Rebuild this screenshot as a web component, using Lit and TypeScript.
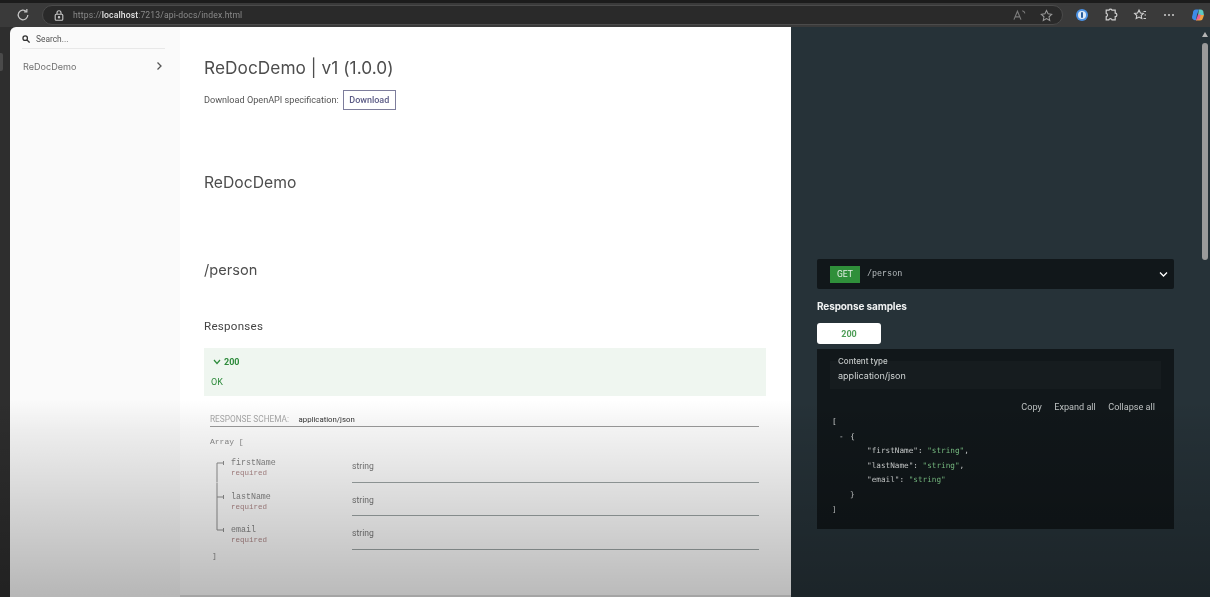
import { LitElement, html, css, svg } from "lit";
import { customElement } from "lit/decorators.js";

const fields = ["firstName", "lastName", "email"];

@customElement("app-root")
export class AppRoot extends LitElement {
  static styles = css`
    :host { display: block; position: relative; width: 1210px; height: 597px; overflow: hidden; background: #2e2e2e; font-family: Roboto, "Liberation Sans", sans-serif; filter: blur(.3px); }
    * { box-sizing: border-box; }
    .toolbar { height: 27px; background: #3a3a3a; border-top: 3px solid #1c1c1c; display: flex; align-items: center; padding: 0 5px 0 16px; }
    .reload { width: 14px; height: 14px; margin-right: 12px; flex: none; }
    .address { flex: none; width: 1021px; height: 20px; border-radius: 10px; background: #2a2a2a; border: 1px solid #4b4b4b; display: flex; align-items: center; padding: 0 9px 0 11px; }
    .lock { width: 10px; height: 11px; margin-right: 9px; flex: none; }
    .url { flex: 1; font-size: 8.6px; color: #8a8a8a; letter-spacing: .12px; }
    .url b { color: #e4e4e4; font-weight: 500; }
    .address svg.a { width: 13px; height: 12px; margin-right: 14px; }
    .address svg.s { width: 13px; height: 13px; }
    .exts { flex: 1; display: flex; align-items: center; justify-content: space-between; padding-left: 12px; }
    .exts svg { width: 14px; height: 14px; flex: none; }
    .page { display: flex; height: 570px; padding-left: 10px; }
    .sidebar { width: 170px; flex: none; background: #fafafa; border-top-left-radius: 6px; padding: 0 15px 0 12px; }
    .search { height: 22px; border-bottom: 1px solid #e8e8e8; display: flex; align-items: center; gap: 6px; font-size: 8.4px; color: #555; padding-top: 3px; }
    .search svg { width: 8px; height: 8px; }
    .nav { display: flex; align-items: center; justify-content: space-between; margin-top: 10px; height: 14px; font-family: Inter, sans-serif; font-size: 9.1px; color: #6f6f6f; padding-left: 1px; }
    .nav svg { width: 8px; height: 10px; margin-right: 2px; }
    .main { width: 611px; flex: none; background: #fff; padding: 0 25px 0 24px; color: #333; }
    h1, h2 { font-family: Inter, sans-serif; font-weight: 400; margin: 0; color: #4d4d4d; }
    h1 { font-size: 17.25px; line-height: 24px; margin-top: 29px; letter-spacing: .05px; }
    .dl { display: flex; align-items: center; gap: 4px; margin-top: 10px; height: 20px; font-size: 9.15px; color: #555; }
    .btn { border: 1px solid #7d7d9c; height: 20px; width: 53px; display: flex; align-items: center; justify-content: center; color: #5b5b86; font-size: 9px; font-weight: 500; }
    .h-a { font-size: 15.7px; line-height: 20px; margin-top: 63px; }
    .h-b { font-size: 14.6px; line-height: 20px; margin-top: 67px; }
    .h-c { font-size: 11.6px; line-height: 16px; margin-top: 38px; color: #444; font-family: Roboto, sans-serif; letter-spacing: .25px; }
    .resp { height: 48px; margin-top: 14px; background: #eff6f0; padding: 8px 7px; color: #2e8b3c; }
    .code200 { display: flex; align-items: center; gap: 3px; height: 12px; font-size: 9px; font-weight: 700; margin-left: 2px; }
    .code200 svg { width: 8px; height: 6px; }
    .ok { font-size: 9px; margin-top: 9px; }
    .schema { margin: 0 7px 0 6px; }
    .sch-head { display: flex; align-items: center; gap: 9.5px; height: 15px; margin-top: 16px; border-bottom: 1px solid #9c9c9c; font-size: 8.3px; color: #a8a8a8; }
    .sch-head span + span { color: #333; font-size: 7.8px; }
    .mono { font-family: "Liberation Mono", monospace; font-size: 8px; color: #8a8a8a; }
    .arr { height: 12px; line-height: 12px; margin-top: 9px; }
    .rows { margin-top: 1px; }
    .row { display: grid; grid-template-columns: 142px 1fr; height: 33.5px; }
    .name { display: flex; font-family: "Liberation Mono", monospace; padding-left: 6px; }
    .name svg { width: 15px; height: 33.5px; flex: none; }
    .nm { font-size: 8.3px; color: #858585; margin-top: 9px; line-height: 10px; }
    .req { font-size: 7.5px; color: #b08a8a; line-height: 10px; }
    .type { border-bottom: 1.5px solid #9ea6a6; font-size: 8.6px; color: #777; padding-top: 12px; line-height: 11px; }
    .end { padding-left: 2px; line-height: 12px; }
    .right { flex: 1; background: #263238; padding: 232px 26px 0; min-width: 0; }
    .op { height: 30px; background: #11171a; border-radius: 2px; display: flex; align-items: center; padding: 0 6px 0 13px; }
    .get { width: 30px; height: 17px; background: #2f8f3a; color: #e3efe4; font-size: 8.6px; display: flex; align-items: center; justify-content: center; margin-right: 7px; }
    .op .path { flex: 1; font-family: "Liberation Mono", monospace; font-size: 8.4px; color: #b8bec0; }
    .op svg { width: 9px; height: 7px; }
    h3 { margin: 10px 0 0; height: 14px; line-height: 14px; color: #f0f2f2; font-size: 10px; font-weight: 700; font-family: Inter, sans-serif; letter-spacing: -.12px; }
    .tab { width: 64px; height: 21px; margin-top: 10px; background: #fff; border-radius: 3px; display: flex; align-items: center; justify-content: center; color: #4f9e58; font-size: 9px; font-weight: 700; }
    .panel { margin-top: 5px; height: 180px; background: #11171a; padding: 12px 13px 0; }
    .ct { height: 28px; background: #161c1f; padding: 9px 8px 0; color: #d0d4d4; font-size: 9.05px; font-family: Inter, sans-serif; position: relative; line-height: 12px; }
    .ct label { position: absolute; left: 8px; top: -5px; font-size: 8px; font-weight: 500; color: #c4c8c8; line-height: 10px; }
    .actions { display: flex; justify-content: flex-end; gap: 12.5px; margin-top: 12px; padding-right: 6px; height: 12px; line-height: 12px; font-size: 9.1px; color: #bfc3c3; }
    .code { font-family: "DejaVu Sans Mono", monospace; font-size: 7.7px; line-height: 14.6px; color: #d4d7d7; margin-top: 2px; margin-left: 2px; }
    .code div { white-space: pre; }
    .code i { font-style: normal; color: #7fc88a; }
    .code .l1 { padding-left: 7px; word-spacing: 2px; }
    .code .l2 { padding-left: 35px; }
    .code .l3 { padding-left: 18px; }
    .scroll { width: 10px; flex: none; background: #263238; display: flex; flex-direction: column; align-items: center; padding-top: 5px; }
    .tri { width: 0; height: 0; border-left: 3.5px solid transparent; border-right: 3.5px solid transparent; border-bottom: 5px solid #b5b5b5; }
    .thumb { width: 6px; height: 217px; margin-top: 6px; border-radius: 3px; background: #9a9a9a; }
    .tag { position: absolute; left: 0; top: 53px; width: 3px; height: 18px; border-radius: 0 2px 2px 0; background: #4a4a4a; }
    .shade { position: absolute; left: 0; right: 0; top: 400px; bottom: 0; background: linear-gradient(to bottom, rgba(0,0,0,0) 0%, rgba(0,0,0,.05) 15%, rgba(0,0,0,.27) 100%); pointer-events: none; }
    .edge { position: absolute; left: 180px; width: 611px; bottom: 0; height: 2px; background: rgba(0,0,0,.12); }
  `;

  connector(i: number) {
    const y = 14;
    const top = i === 0 ? y : 0;
    const bottom = i === 2 ? y : 33.5;
    return html`<svg viewBox="0 0 15 33.5">
      ${svg`<path d="M1 ${top}V${bottom}M1 ${y}H7M7.5 ${y - 2}V${y + 2}" fill="none" stroke="#8f8f8f" stroke-width="1"/>`}
    </svg>`;
  }

  render() {
    return html`
      <div class="toolbar">
        <svg class="reload" viewBox="0 0 16 16" fill="none" stroke="#c6c6c6" stroke-width="1.4"><path d="M13.5 8a5.5 5.5 0 1 1-1.7-4"/><path d="M12.4 1.2V4.3H9.3"/></svg>
        <div class="address">
          <svg class="lock" viewBox="0 0 10 11" fill="none" stroke="#c8c8c8" stroke-width="1.1"><rect x="1.2" y="4.2" width="7.6" height="6" rx="1"/><path d="M3 4V2.8a2 2 0 0 1 4 0V4"/><circle cx="5" cy="7.2" r=".7" fill="#c8c8c8"/></svg>
          <div class="url">https://<b>localhost</b>:7213/api-docs/index.html</div>
          <svg class="a" viewBox="0 0 14 12" fill="none" stroke="#7c7c7c" stroke-width="1.2"><path d="M1 11L4.8 2 8.6 11M2.4 8H7.2"/><path d="M10 1.5c1.5.3 2.5 1.3 2.8 2.8"/></svg>
          <svg class="s" viewBox="0 0 14 14" fill="none" stroke="#9a9a9a" stroke-width="1.1"><path d="M7 1.6l1.7 3.6 3.9.5-2.9 2.7.8 3.9L7 10.4l-3.5 1.9.8-3.9L1.4 5.7l3.9-.5z"/></svg>
        </div>
        <div class="exts">
          <svg viewBox="0 0 14 14"><circle cx="7" cy="7" r="6" fill="#4a90e2"/><circle cx="7" cy="7" r="4" fill="#dfeaf7"/><rect x="6" y="4" width="2" height="6" rx="1" fill="#2a5f9e"/></svg>
          <svg viewBox="0 0 14 14" fill="none" stroke="#cfcfcf" stroke-width="1.2"><path d="M5 2.2a1.6 1.6 0 0 1 3 0h3.2v3a1.7 1.7 0 0 1 0 3.4v3.2H8a1.7 1.7 0 0 0-3.2 0H2.2V8.7a1.7 1.7 0 0 0 0-3.3V2.2z"/></svg>
          <svg viewBox="0 0 14 14" fill="none" stroke="#cfcfcf" stroke-width="1.1"><path d="M6 2l1.4 3 3 .4-2.2 2.1.6 3L6 9.1 3.2 10.5l.6-3L1.6 5.4l3-.4z"/><path d="M10.5 3.5H13M11.5 7H13M10.5 10.5H13"/></svg>
          <svg viewBox="0 0 14 14" fill="#cfcfcf"><circle cx="3" cy="7" r="1"/><circle cx="7" cy="7" r="1"/><circle cx="11" cy="7" r="1"/></svg>
          <svg viewBox="0 0 14 14"><path d="M2 5a3 3 0 0 1 3-3.5h3l-2 5-1 5.500A3 3 0 0 1 1 9z" fill="#3d8be8"/><path d="M8 1.500h1.500A3 3 0 0 1 12.500 5L13 7H7z" fill="#5ec8c0"/><path d="M5 12.500h4A3 3 0 0 0 12 10l1-3H8z" fill="#f0a040"/><path d="M5 12.500l2-6h3L8.500 11z" fill="#e8609a"/></svg>
        </div>
      </div>
      <div class="page">
        <aside class="sidebar">
          <div class="search"><svg viewBox="0 0 10 10" fill="none" stroke="#333" stroke-width="1.6"><circle cx="4" cy="4" r="2.8"/><path d="M6 6l3.500 3.500"/></svg>Search...</div>
          <div class="nav"><span>ReDocDemo</span><svg viewBox="0 0 8 10" fill="none" stroke="#555" stroke-width="1.3"><path d="M2.500 1.500L6 5 2.500 8.500"/></svg></div>
        </aside>
        <main class="main">
          <h1>ReDocDemo | v1 (1.0.0)</h1>
          <div class="dl">Download OpenAPI specification: <div class="btn">Download</div></div>
          <h2 class="h-a">ReDocDemo</h2>
          <h2 class="h-b">/person</h2>
          <h2 class="h-c">Responses</h2>
          <div class="resp">
            <div class="code200"><svg viewBox="0 0 8 6" fill="none" stroke="#2e8b3c" stroke-width="1.200"><path d="M1 1l3 3.500L7 1"/></svg>200</div>
            <div class="ok">OK</div>
          </div>
          <div class="schema">
            <div class="sch-head"><span>RESPONSE SCHEMA:</span><span>application/json</span></div>
            <div class="mono arr">Array [</div>
            <div class="rows">
              ${fields.map((f, i) => html`
                <div class="row">
                  <div class="name">${this.connector(i)}<div><div class="nm">${f}</div><div class="req">required</div></div></div>
                  <div class="type">string</div>
                </div>`)}
            </div>
            <div class="mono end">]</div>
          </div>
        </main>
        <section class="right">
          <div class="op"><div class="get">GET</div><div class="path">/person</div><svg viewBox="0 0 9 7" fill="none" stroke="#fff" stroke-width="1.300"><path d="M1 1.500l3.500 3.500L8 1.500"/></svg></div>
          <h3>Response samples</h3>
          <div class="tab">200</div>
          <div class="panel">
            <div class="ct"><label>Content type</label>application/json</div>
            <div class="actions"><span>Copy</span><span>Expand all</span><span>Collapse all</span></div>
            <div class="code">
              <div>[</div>
              <div class="l1">- {</div>
              <div class="l2">"firstName": <i>"string"</i>,</div>
              <div class="l2">"lastName": <i>"string"</i>,</div>
              <div class="l2">"email": <i>"string"</i></div>
              <div class="l3">}</div>
              <div>]</div>
            </div>
          </div>
        </section>
        <div class="scroll"><div class="tri"></div><div class="thumb"></div></div>
      </div>
      <div class="tag"></div>
      <div class="edge"></div>
      <div class="shade"></div>
    `;
  }
}
